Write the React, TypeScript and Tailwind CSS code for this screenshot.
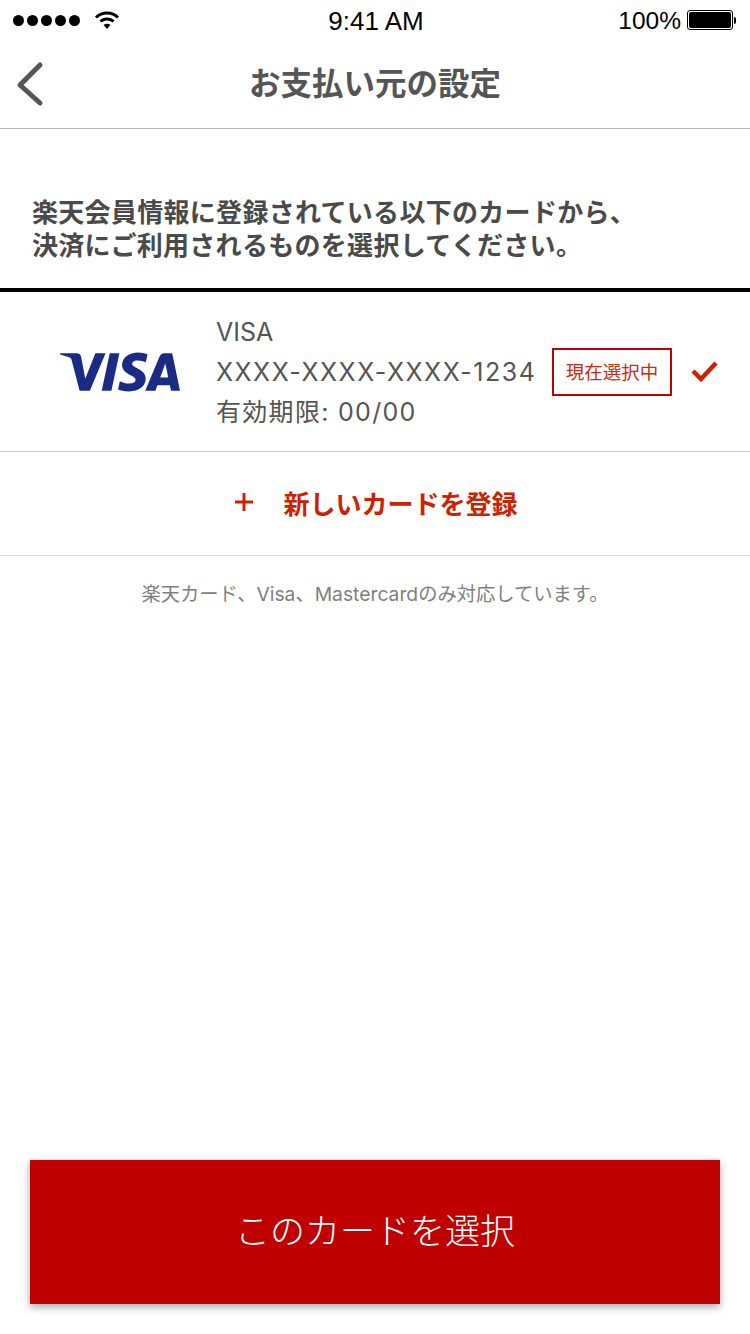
import { SiVisa } from "react-icons/si";

const jp = "font-['Noto_Sans_CJK_JP','Noto_Sans',sans-serif]";
const mixed = "font-['Inter','Noto_Sans_CJK_JP',sans-serif]";
const latin = "font-['Liberation_Sans','Noto_Sans_CJK_JP',sans-serif]";

const StatusBar = () => (
  <div className={`flex h-10 shrink-0 items-center justify-between pl-[13px] pr-[14px] text-black ${latin}`}>
    <div className="flex w-[200px] items-center gap-[14px]">
      <div className="flex gap-[3px]">
        {[0, 1, 2, 3, 4].map((dot) => (
          <span key={dot} className="h-[11px] w-[11px] rounded-full bg-black" />
        ))}
      </div>
      <svg width="26" height="20" viewBox="0 0 26 20" fill="none" stroke="black" strokeWidth="3">
        <path d="M2 7.5C8 1.5 18 1.5 24 7.5" />
        <path d="M6.5 11.5C10 8 16 8 19.5 11.5" />
        <path d="M13 19L9.5 15C11.5 13.2 14.5 13.2 16.500 15Z" fill="black" stroke="none" />
      </svg>
    </div>
    <span className="pl-[3px] pt-[2px] text-[26px] leading-none">9:41 AM</span>
    <div className="flex w-[200px] items-center justify-end gap-[6px]">
      <span className="pt-[2px] text-[24.500px] leading-none">100%</span>
      <div className="flex items-center">
        <div className="h-[20px] w-[46px] rounded-[3px] border border-black p-[1px]">
          <div className="h-full w-full rounded-[2px] bg-black" />
        </div>
        <span className="ml-[1px] h-[7px] w-[2px] rounded-r-sm bg-black" />
      </div>
    </div>
  </div>
);

const NavBar = () => (
  <div className="relative flex h-[89px] shrink-0 items-center justify-center border-b border-[#b8b8b8] pb-[4px]">
    <svg className="absolute left-[15px] top-[21px]" width="30" height="46" viewBox="0 0 30 46" fill="none" stroke="#555" strokeWidth="5" strokeLinecap="round" strokeLinejoin="round">
      <path d="M25 4L5 24L25 42" />
    </svg>
    <h1 className={`text-[31.5px] font-bold leading-none text-[#555] ${jp}`}>お支払い元の設定</h1>
  </div>
);

const CardRow = () => (
  <div className="flex h-[160px] shrink-0 items-center border-b border-[#cfcfcf]">
    <div className="flex w-[216px] shrink-0 justify-center pl-[24px]">
      <SiVisa className="text-[#1a2b86]" size={120} />
    </div>
    <div className={`flex w-[336px] shrink-0 flex-col gap-[6px] text-[#555] ${mixed}`}>
      <span className="text-[25px] leading-[34px]">VISA</span>
      <span className="text-[25px] leading-[34px] tracking-[1.5px]">XXXX-XXXX-XXXX-1234</span>
      <span className="text-[25px] leading-[34px] tracking-[1.3px]">有効期限: 00/00</span>
    </div>
    <div className={`flex h-[48px] w-[120px] shrink-0 items-center justify-center border-2 border-[#bf0000] text-[18.500px] text-[#cc2a10] ${jp}`}>
      現在選択中
    </div>
    <svg className="ml-[19px] shrink-0" width="28" height="24" viewBox="0 0 28 24" fill="none" stroke="#cc2200" strokeWidth="4.500">
      <path d="M2 11L10 19L25 3" />
    </svg>
  </div>
);

export default function App() {
  return (
    <div className="flex h-[1334px] w-[750px] flex-col bg-white">
      <StatusBar />
      <NavBar />
      <div className={`mt-[65px] pl-[32px] text-[26px] font-bold leading-[33px] tracking-[0.3px] text-[#4a4a4a] ${jp}`}>
        <p>楽天会員情報に登録されている以下のカードから、</p>
        <p>決済にご利用されるものを選択してください。</p>
      </div>
      <div className="mt-[28px] h-1 shrink-0 bg-black" />
      <CardRow />
      <div className={`flex h-[104px] shrink-0 items-center justify-center gap-[29px] border-b border-[#e0e0e0] pb-[3px] pl-[2px] text-[26px] font-bold text-[#cc2200] ${jp}`}>
        <svg width="20" height="20" viewBox="0 0 20 20" stroke="#cc2200" strokeWidth="3">
          <path d="M10 1V19M1 10H19" />
        </svg>
        <span>新しいカードを登録</span>
      </div>
      <p className={`mt-[23px] text-center text-[19.300px] leading-[30px] text-[#808080] ${mixed}`}>
        楽天カード、Visa、Mastercardのみ対応しています。
      </p>
      <button className={`mx-[30px] mb-[30px] mt-auto flex h-[144px] shrink-0 items-center justify-center bg-[#bf0000] pb-[5px] text-[35px] font-light text-white shadow-[0_3px_8px_rgba(0,0,0,0.35)] ${jp}`}>
        このカードを選択
      </button>
    </div>
  );
}
